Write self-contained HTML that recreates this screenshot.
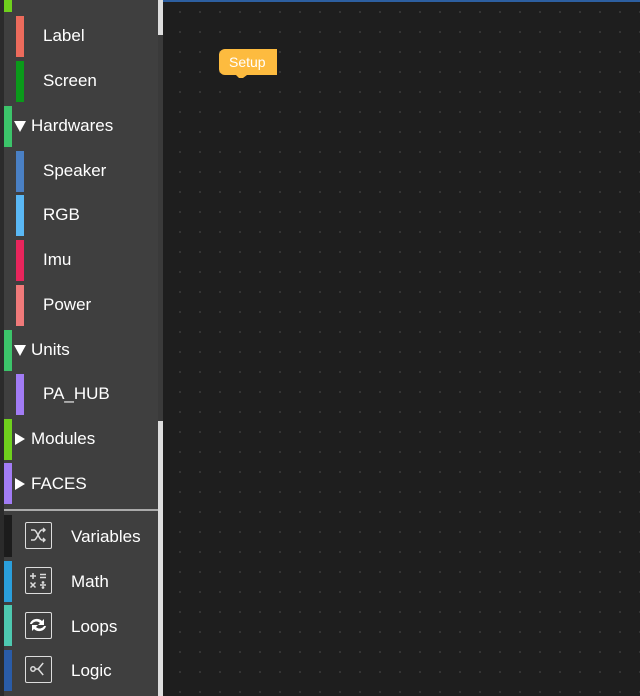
<!DOCTYPE html>
<html><head><style>
body{margin:0;width:640px;height:696px;overflow:hidden;background:#1e1e1e;font-family:"Liberation Sans",sans-serif;position:relative}
.side{position:absolute;left:0;top:0;width:158px;height:696px;background:#3f3f3f}
.strip{position:absolute;left:0;top:0;width:4px;height:696px;background:#2b2b2b}
.bar{position:absolute;width:8px;height:41px}
.t{position:absolute;color:#fff;font-size:17px;line-height:20px}
.tri{position:absolute;width:0;height:0}
.down{border-left:6px solid transparent;border-right:6px solid transparent;border-top:11px solid #fff}
.right{border-top:6px solid transparent;border-bottom:6px solid transparent;border-left:10px solid #fff}
.ic{position:absolute;left:25px;width:27px;height:27px;border:1.5px solid #ddd;border-radius:2px;box-sizing:border-box}
.canvas{position:absolute;left:163px;top:0;right:0;bottom:0;background-color:#1e1e1e;background-image:radial-gradient(circle,#444 0.7px,transparent 1px);background-size:20px 20px;background-position:7px 0px;border-top:2px solid #2d5fa0}
</style></head><body>
<div class="side"></div>
<div class="strip"></div>
<div style="position:absolute;left:158px;top:0;width:5px;height:696px;background:#3a3a3a"></div>
<div style="position:absolute;left:158px;top:0;width:5px;height:35px;background:#ddd"></div>
<div style="position:absolute;left:158px;top:421px;width:5px;height:275px;background:#ddd"></div>
<div class="canvas"></div>

<div class="bar" style="left:4px;top:0;height:12px;background:#6fd11d"></div>
<div class="bar" style="left:16px;top:16px;background:#ec6b5c"></div><div class="t" style="left:43px;top:26px">Label</div>
<div class="bar" style="left:16px;top:61px;background:#0a9a1a"></div><div class="t" style="left:43px;top:71px">Screen</div>
<div class="bar" style="left:4px;top:106px;background:#3cc46a"></div><div class="tri down" style="left:14px;top:121px"></div><div class="t" style="left:31px;top:116px">Hardwares</div>
<div class="bar" style="left:16px;top:151px;background:#4a80c4"></div><div class="t" style="left:43px;top:161px">Speaker</div>
<div class="bar" style="left:16px;top:195px;background:#5ab8f5"></div><div class="t" style="left:43px;top:205px">RGB</div>
<div class="bar" style="left:16px;top:240px;background:#e8255c"></div><div class="t" style="left:43px;top:250px">Imu</div>
<div class="bar" style="left:16px;top:285px;background:#f07a7a"></div><div class="t" style="left:43px;top:295px">Power</div>
<div class="bar" style="left:4px;top:330px;background:#3cc46a"></div><div class="tri down" style="left:14px;top:345px"></div><div class="t" style="left:31px;top:340px">Units</div>
<div class="bar" style="left:16px;top:374px;background:#a27cf5"></div><div class="t" style="left:43px;top:384px">PA_HUB</div>
<div class="bar" style="left:4px;top:419px;background:#6fd11d"></div><div class="tri right" style="left:15px;top:433px"></div><div class="t" style="left:31px;top:429px">Modules</div>
<div class="bar" style="left:4px;top:463px;background:#a27cf5"></div><div class="tri right" style="left:15px;top:478px"></div><div class="t" style="left:31px;top:474px">FACES</div>
<div style="position:absolute;left:4px;top:509px;width:154px;height:2px;background:#aaa"></div>

<div class="bar" style="left:4px;top:515px;height:42px;background:#1c1c1c"></div>
<div class="ic" style="top:522px"><svg width="24" height="24" viewBox="0 0 24 24" fill="none" stroke="#ddd" stroke-width="1.4"><path d="M5 7h3c3 0 5 10 8 10h3M5 17h3c3 0 5-10 8-10h3M17 5l2 2-2 2M17 15l2 2-2 2"/></svg></div>
<div class="t" style="left:71px;top:527px">Variables</div>
<div class="bar" style="left:4px;top:561px;background:#2a9fdc"></div>
<div class="ic" style="top:567px"><svg width="24" height="24" viewBox="0 0 24 24" fill="none" stroke="#ddd" stroke-width="1.5"><path d="M4 8h6M7 5v6M14 6.5h6M14 9.5h6M4.5 14.5l5 5M9.5 14.5l-5 5M14 17h6"/><circle cx="17" cy="14.5" r=".6" fill="#ddd"/><circle cx="17" cy="19.5" r=".6" fill="#ddd"/></svg></div>
<div class="t" style="left:71px;top:572px">Math</div>
<div class="bar" style="left:4px;top:605px;background:#4ec9b0"></div>
<div class="ic" style="top:612px"><svg width="24" height="24" viewBox="0 0 24 24" fill="#fff"><path d="M4 11c1-5 8-7 12-3l2-2v6h-6l2-2c-3-3-7-1-8 1z"/><path d="M20 13c-1 5-8 7-12 3l-2 2v-6h6l-2 2c3 3 7 1 8-1z"/></svg></div>
<div class="t" style="left:71px;top:617px">Loops</div>
<div class="bar" style="left:4px;top:650px;background:#2a5ca8"></div>
<div class="ic" style="top:656px"><svg width="24" height="24" viewBox="0 0 24 24" fill="none" stroke="#ddd" stroke-width="1.5"><circle cx="7" cy="12" r="2.2"/><path d="M9.2 12h3l5-6M12.2 12l5 6"/></svg></div>
<div class="t" style="left:71px;top:661px">Logic</div>

<svg style="position:absolute;left:219px;top:49px" width="60" height="30"><path d="M6 0h52v26H28l-4 3h-4l-3-3H6a6 6 0 0 1-6-6V6a6 6 0 0 1 6-6z" fill="#fdbb3f"/><text x="10" y="18" fill="#fff" font-family="Liberation Sans" font-size="14">Setup</text></svg>
</body></html>
